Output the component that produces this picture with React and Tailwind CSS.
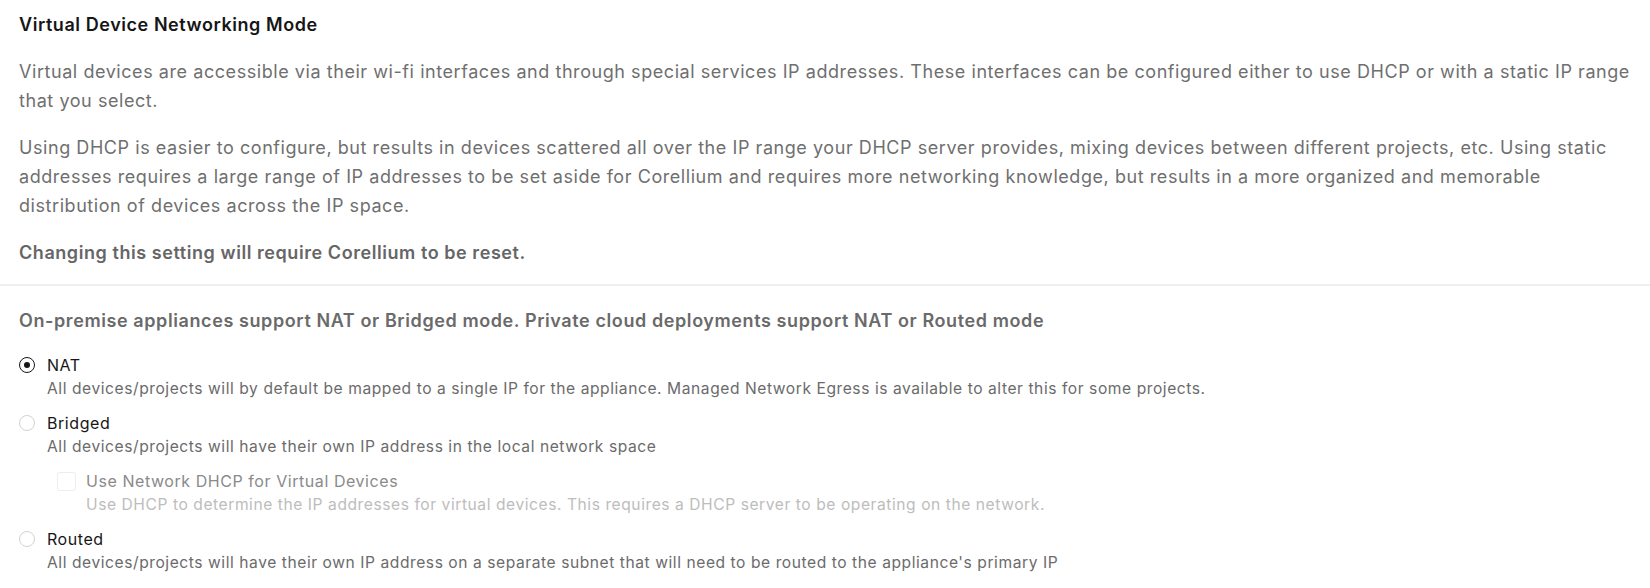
const options = [
  {
    id: "nat",
    label: "NAT",
    description:
      "All devices/projects will by default be mapped to a single IP for the appliance. Managed Network Egress is available to alter this for some projects.",
    checked: true,
  },
  {
    id: "bridged",
    label: "Bridged",
    description: "All devices/projects will have their own IP address in the local network space",
    sub: {
      label: "Use Network DHCP for Virtual Devices",
      description:
        "Use DHCP to determine the IP addresses for virtual devices. This requires a DHCP server to be operating on the network.",
    },
  },
  {
    id: "routed",
    label: "Routed",
    description:
      "All devices/projects will have their own IP address on a separate subnet that will need to be routed to the appliance's primary IP",
  },
];

function Radio({ checked }) {
  if (checked) {
    return (
      <span className="mt-[4px] flex h-[16px] w-[16px] shrink-0 items-center justify-center rounded-full border-[1.5px] border-[#161616] bg-white">
        <span className="h-[6px] w-[6px] rounded-full bg-[#161616]" />
      </span>
    );
  }
  return <span className="mt-[4px] h-[16px] w-[16px] shrink-0 rounded-full border border-[#d2d2d2] bg-white" />;
}

export default function App() {
  return (
    <div className="min-h-screen bg-white font-['Inter','Liberation_Sans',sans-serif] tracking-[0.035em] antialiased">
      <div className="px-[19px] pt-[11px]">
        <h2 className="text-[18px] font-semibold leading-[28px] text-[#161616]">
          Virtual Device Networking Mode
        </h2>
        <div className="mt-[18px] space-y-[18px] text-[18px] leading-[29px] text-[#6f6f6f]">
          <p>
            Virtual devices are accessible via their wi-fi interfaces and through special services IP
            addresses. These interfaces can be configured either to use DHCP or with a static IP range
            that you select.
          </p>
          <p>
            Using DHCP is easier to configure, but results in devices scattered all over the IP range
            your DHCP server provides, mixing devices between different projects, etc. Using static
            addresses requires a large range of IP addresses to be set aside for Corellium and requires
            more networking knowledge, but results in a more organized and memorable distribution of
            devices across the IP space.
          </p>
          <p className="font-semibold text-[#666]">Changing this setting will require Corellium to be reset.</p>
        </div>
      </div>

      <div className="mt-[17px] h-[2px] bg-[#f0f0f0]" />

      <div className="px-[19px] pt-[20px]">
        <p className="text-[18px] font-semibold leading-[29px] tracking-[0.033em] text-[#6a6a6a]">
          On-premise appliances support NAT or Bridged mode. Private cloud deployments support NAT or
          Routed mode
        </p>
        <div className="mt-[18px] flex flex-col gap-[10px]">
          {options.map((opt) => (
            <div key={opt.id} className="flex gap-[12px]">
              <Radio checked={opt.checked} />
              <div>
                <div className="text-[16px] leading-[24px] text-[#161616]">{opt.label}</div>
                <div className="text-[15.6px] leading-[24px] text-[#6b6b6b]">{opt.description}</div>
                {opt.sub && (
                  <div className="mt-[10px] flex gap-[10px] pl-[10px]">
                    <span className="mt-[3px] h-[19px] w-[19px] shrink-0 rounded-[3px] border border-[#ededed] bg-white" />
                    <div>
                      <div className="text-[16px] leading-[24px] text-[#8a8a8a]">{opt.sub.label}</div>
                      <div className="text-[15.6px] leading-[24px] text-[#bdbdbd]">{opt.sub.description}</div>
                    </div>
                  </div>
                )}
              </div>
            </div>
          ))}
        </div>
      </div>
    </div>
  );
}
